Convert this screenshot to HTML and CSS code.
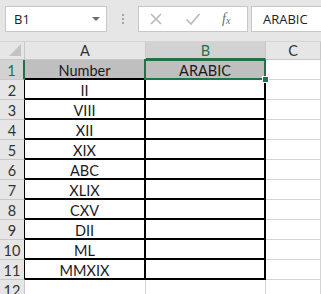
FILE: index.html
```html
<!DOCTYPE html>
<html lang="en">
<head>
    <meta charset="UTF-8">
    <title>ARABIC</title>
    <link rel="stylesheet" href="styles.css">
</head>
<body>
    <div class="formula-bar">
        <div class="name-box">
            <span>B1</span>
            <span class="caret"></span>
        </div>
        <div class="grip"><i></i><i></i><i></i></div>
        <div class="fx-buttons">
            <svg class="btn-icon" width="14" height="14" viewBox="0 0 14 14">
                <path d="M2 2 L12 12 M12 2 L2 12" stroke="#b9b9b9" stroke-width="1.6" fill="none"/>
            </svg>
            <svg class="btn-icon" width="16" height="14" viewBox="0 0 16 14">
                <path d="M1.5 7.5 L6 12 L14.5 2" stroke="#b9b9b9" stroke-width="1.6" fill="none"/>
            </svg>
            <span class="fx">f<sub>x</sub></span>
        </div>
        <div class="formula-input">ARABIC</div>
    </div>

    <div class="sheet">
        <div class="corner"></div>
        <div class="col-head">A</div>
        <div class="col-head active">B</div>
        <div class="col-head">C</div>

        <div class="row-head active">1</div>
        <div class="cell boxed title">Number</div>
        <div class="cell boxed title selected">ARABIC<span class="handle"></span></div>
        <div class="cell"></div>

        <div class="row-head">2</div>
        <div class="cell boxed">II</div>
        <div class="cell boxed"></div>
        <div class="cell"></div>

        <div class="row-head">3</div>
        <div class="cell boxed">VIII</div>
        <div class="cell boxed"></div>
        <div class="cell"></div>

        <div class="row-head">4</div>
        <div class="cell boxed">XII</div>
        <div class="cell boxed"></div>
        <div class="cell"></div>

        <div class="row-head">5</div>
        <div class="cell boxed">XIX</div>
        <div class="cell boxed"></div>
        <div class="cell"></div>

        <div class="row-head">6</div>
        <div class="cell boxed">ABC</div>
        <div class="cell boxed"></div>
        <div class="cell"></div>

        <div class="row-head">7</div>
        <div class="cell boxed">XLIX</div>
        <div class="cell boxed"></div>
        <div class="cell"></div>

        <div class="row-head">8</div>
        <div class="cell boxed">CXV</div>
        <div class="cell boxed"></div>
        <div class="cell"></div>

        <div class="row-head">9</div>
        <div class="cell boxed">DII</div>
        <div class="cell boxed"></div>
        <div class="cell"></div>

        <div class="row-head">10</div>
        <div class="cell boxed">ML</div>
        <div class="cell boxed"></div>
        <div class="cell"></div>

        <div class="row-head">11</div>
        <div class="cell boxed">MMXIX</div>
        <div class="cell boxed"></div>
        <div class="cell"></div>

        <div class="row-head plain">12</div>
        <div class="cell"></div>
        <div class="cell"></div>
        <div class="cell"></div>
    </div>
</body>
</html>
```

FILE: styles.css
```css
* {
    margin: 0;
    padding: 0;
    box-sizing: border-box;
}

body {
    width: 321px;
    height: 294px;
    overflow: hidden;
    background: #ffffff;
    font-family: 'Lato', 'Liberation Sans', sans-serif;
    color: #1a1a1a;
}

/* formula bar */
.formula-bar {
    height: 42px;
    background: #e6e6e6;
    display: flex;
    align-items: flex-start;
    padding-top: 6px;
    padding-left: 5px;
    border-bottom: 1px solid #d4d4d4;
}

.name-box {
    width: 102px;
    height: 26px;
    background: #fff;
    border: 1px solid #c6c6c6;
    display: flex;
    align-items: center;
    justify-content: space-between;
    padding: 0 6px 0 8px;
    font-family: 'Open Sans', sans-serif;
    font-size: 13px;
    color: #222;
}

.caret {
    width: 0;
    height: 0;
    border-left: 4px solid transparent;
    border-right: 4px solid transparent;
    border-top: 4px solid #6b6b6b;
}

.grip {
    width: 31px;
    height: 26px;
    display: flex;
    flex-direction: column;
    align-items: center;
    justify-content: center;
    gap: 2px;
}

.grip i {
    width: 2px;
    height: 2px;
    background: #a6a6a6;
}

.fx-buttons {
    width: 110px;
    height: 26px;
    background: #fff;
    border: 1px solid #c6c6c6;
    display: flex;
    align-items: center;
    padding-left: 10px;
    gap: 22px;
}

.fx {
    font-family: 'Liberation Serif', serif;
    font-style: italic;
    font-size: 14px;
    color: #6f6f6f;
    margin-left: -1px;
}

.fx sub {
    font-size: 10px;
    vertical-align: -1px;
}

.formula-input {
    flex: 1;
    height: 26px;
    margin-left: 3px;
    background: #fff;
    border: 1px solid #c6c6c6;
    border-right: none;
    display: flex;
    align-items: center;
    padding-left: 11px;
    font-family: 'Open Sans', sans-serif;
    font-size: 13px;
    color: #222;
}

/* grid */
.sheet {
    display: grid;
    grid-template-columns: 25px 121px 120px 1fr;
    grid-template-rows: 18px repeat(12, 20px);
    font-size: 14.5px;
}

.corner {
    background: #e6e6e6;
    border-right: 1px solid #c8c8c8;
    border-bottom: 1px solid #c8c8c8;
    position: relative;
}

.corner::after {
    content: "";
    position: absolute;
    right: 3px;
    bottom: 3px;
    border-left: 12px solid transparent;
    border-bottom: 12px solid #c2c2c2;
}

.col-head {
    background: #e6e6e6;
    border-right: 1px solid #c8c8c8;
    border-bottom: 1px solid #c8c8c8;
    display: flex;
    align-items: center;
    justify-content: center;
    color: #333;
}

.col-head.active {
    background: #d2d2d2;
    border-bottom: 2px solid #217346;
    color: #217346;
}

.row-head {
    background: #e6e6e6;
    border-right: 1px solid #000;
    border-bottom: 1px solid #c8c8c8;
    display: flex;
    align-items: center;
    justify-content: center;
    padding-top: 2px;
    color: #333;
}

.row-head.active {
    background: #d2d2d2;
    border-right: 2px solid #217346;
    color: #217346;
}

.row-head.plain {
    border-right-color: #c8c8c8;
}

.cell {
    border-right: 1px solid #d4d4d4;
    border-bottom: 1px solid #d4d4d4;
    display: flex;
    align-items: center;
    justify-content: center;
    padding-top: 2px;
}

.cell.boxed {
    border-right: 2px solid #000;
    border-bottom: 2px solid #000;
}

.cell.title {
    background: #bfbfbf;
}

.cell.selected {
    position: relative;
}

.cell.selected::after {
    content: "";
    position: absolute;
    left: -2px;
    top: -1px;
    right: -2px;
    bottom: -2px;
    border: 2px solid #217346;
}

.handle {
    position: absolute;
    right: -5px;
    bottom: -5px;
    width: 7px;
    height: 7px;
    background: #217346;
    border: 1px solid #fff;
    z-index: 1;
}
```
